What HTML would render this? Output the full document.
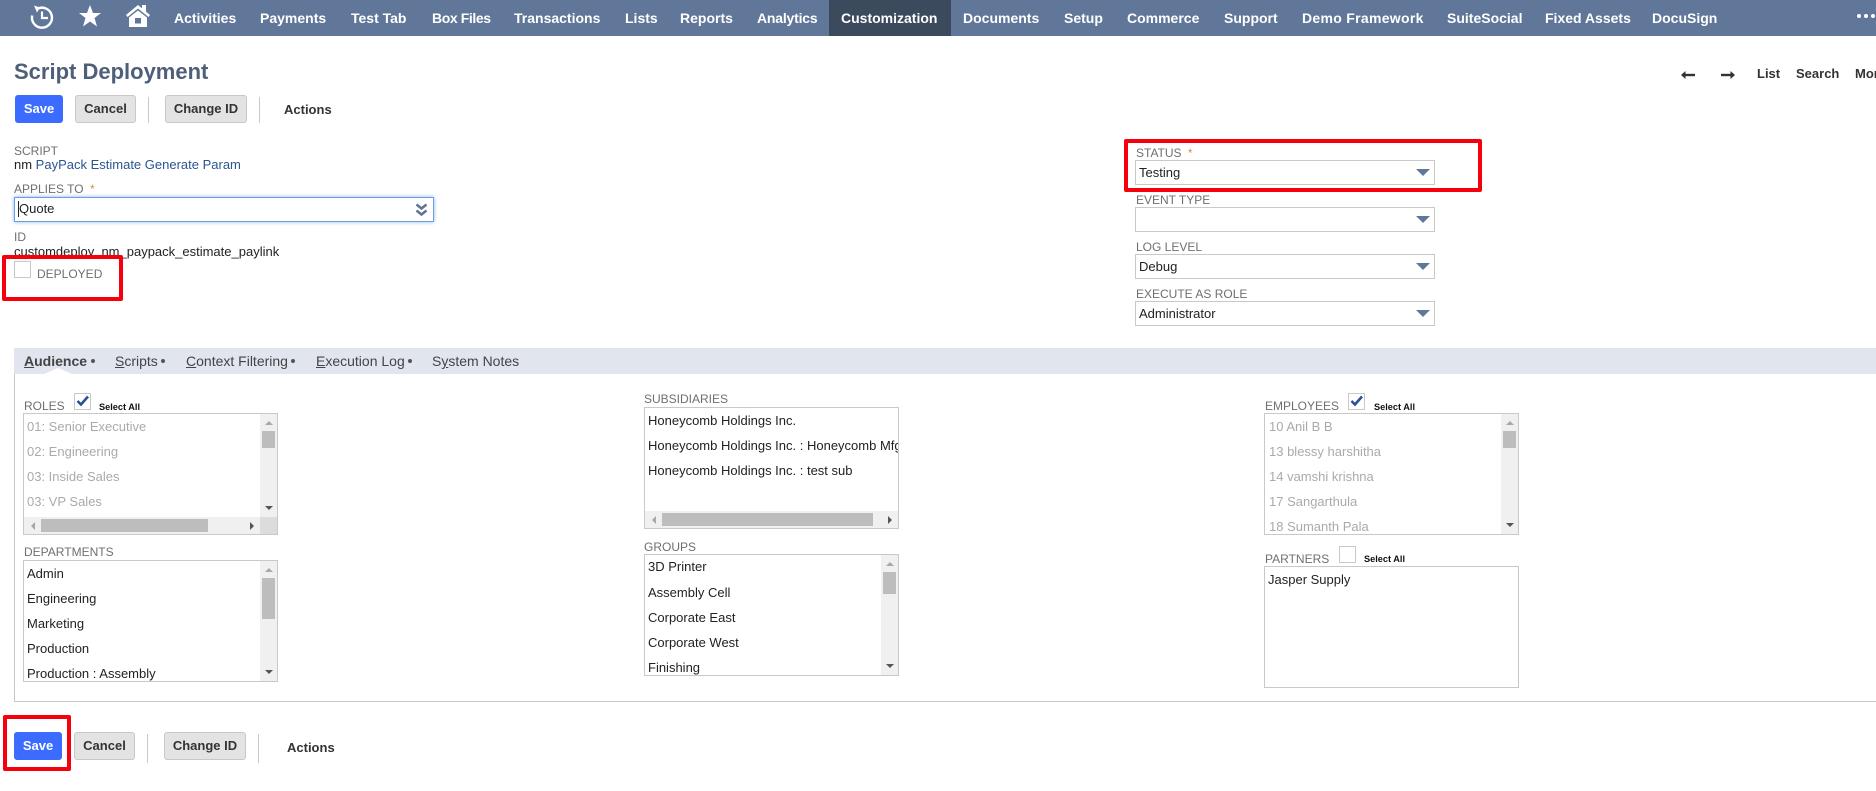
<!DOCTYPE html>
<html><head><meta charset="utf-8"><title>Script Deployment</title>
<style>
html,body{margin:0;padding:0;width:1876px;height:791px;overflow:hidden;background:#fff}
body{position:relative;font:13px/16px "Liberation Sans",Arial,sans-serif;color:#222}
.a,.t,.n,.l,.b,.box,.sel,.cb,.sa{position:absolute}
.t,.n,.l,.sa{white-space:nowrap}
.n{top:9px;font:bold 14px/18px "Liberation Sans",sans-serif;color:#fff}
.l{font-size:12px;line-height:14px;color:#6f6f6f}
.b{box-sizing:border-box;height:28px;top:95px;background:#e3e3e3;border:1px solid #c8c8c8;border-radius:3px;text-align:center;font:bold 13px/25px "Liberation Sans",sans-serif;color:#333}
.b.s{background:#3b6cff;border-color:#3b6cff;color:#fff}
.sep{position:absolute;width:1px;background:#c9c9c9}
.box{box-sizing:border-box;border:1px solid #c9c9c9;background:#fff;overflow:hidden;width:255px;height:122px}
.it{position:absolute;left:3px;white-space:nowrap;font-size:13px;line-height:16px;color:#222}
.dis .it{color:#aaa}
.vs{position:absolute;right:0;top:0;width:17px;height:100%;background:#f0f0f0}
.th{position:absolute;background:#bdbdbd}
.hs{position:absolute;left:0;bottom:0;height:17px;width:100%;background:#f0f0f0}
.corner{position:absolute;right:0;bottom:0;width:17px;height:17px;background:#dcdcdc}
.up,.dn,.lf,.rt{position:absolute;width:0;height:0}
.up{border-left:4px solid transparent;border-right:4px solid transparent;border-bottom:4px solid #a8a8a8}
.dn{border-left:4px solid transparent;border-right:4px solid transparent;border-top:4px solid #555}
.lf{border-top:4px solid transparent;border-bottom:4px solid transparent;border-right:4px solid #a8a8a8}
.rt{border-top:4px solid transparent;border-bottom:4px solid transparent;border-left:4px solid #555}
.sel{box-sizing:border-box;left:1135px;width:300px;height:25px;border:1px solid #c9c9c9;background:#fff;padding-left:3px;line-height:23px;font-size:13px;color:#222}
.sel svg{position:absolute;left:280px;top:7px}
.cb{box-sizing:border-box;width:17px;height:17px;border:1px solid #c9c9c9;background:#fff}
.sa{font:bold 9.2px/12px "Liberation Sans",sans-serif;color:#111}
.red{position:absolute;box-sizing:border-box;border:4px solid #f5000c;border-radius:2px}
.tab{position:absolute;top:353px;font-size:14px;line-height:16px;color:#444;white-space:nowrap}
.tab u{text-decoration:underline}
.d{position:absolute;top:359px;width:4px;height:4px;border-radius:50%;background:#555}
</style></head><body>

<div class="a" style="left:0;top:0;width:1876px;height:36px;background:#607799"></div>
<div class="a" style="left:829px;top:0;width:122px;height:36px;background:#3c4a5e"></div>

<svg class="a" style="left:29px;top:3px" width="26" height="28" viewBox="0 0 26 28" fill="none" stroke="#fff">
<path d="M9 5.5A10 10 0 1 1 3.2 12.5" stroke-width="2.4"/>
<path d="M5 2.5L11 4.5L8 9.5Z" fill="#fff" stroke="none"/>
<path d="M13 8.5V15H19" stroke-width="2.2"/>
</svg>
<svg class="a" style="left:78px;top:4px" width="24" height="24" viewBox="0 0 24 24"><path d="M12 1L15 9H23L16.5 14L19 22.5L12 17.5L5 22.5L7.5 14L1 9H9Z" fill="#fff"/></svg>
<svg class="a" style="left:125px;top:3px" width="26" height="25" viewBox="0 0 26 25">
<path d="M1 12L13 2L17 5.3V2H21V8.6L25 12L23.5 14L13 5.5L2.5 14Z" fill="#fff"/>
<path d="M4 14.5L13 7.5L22 14.5V24H4Z" fill="#fff"/><rect x="10" y="15" width="6" height="5.5" fill="#607799"/>
</svg>

<div class="n" style="left:174px">Activities</div>
<div class="n" style="left:260px">Payments</div>
<div class="n" style="left:351px">Test Tab</div>
<div class="n" style="left:432px;letter-spacing:-.4px">Box Files</div>
<div class="n" style="left:514px">Transactions</div>
<div class="n" style="left:625px">Lists</div>
<div class="n" style="left:680px">Reports</div>
<div class="n" style="left:757px;letter-spacing:-.2px">Analytics</div>
<div class="n" style="left:841px">Customization</div>
<div class="n" style="left:963px">Documents</div>
<div class="n" style="left:1064px">Setup</div>
<div class="n" style="left:1127px">Commerce</div>
<div class="n" style="left:1224px">Support</div>
<div class="n" style="left:1302px;letter-spacing:.3px">Demo Framework</div>
<div class="n" style="left:1447px">SuiteSocial</div>
<div class="n" style="left:1545px">Fixed Assets</div>
<div class="n" style="left:1652px">DocuSign</div>
<div class="a" style="left:1857px;top:14px;width:4px;height:4px;border-radius:50%;background:#fff"></div>
<div class="a" style="left:1864px;top:14px;width:4px;height:4px;border-radius:50%;background:#fff"></div>
<div class="a" style="left:1871px;top:14px;width:4px;height:4px;border-radius:50%;background:#fff"></div>

<div class="t" style="left:14px;top:58px;font:bold 22px/28px 'Liberation Sans',sans-serif;color:#4d5f79">Script Deployment</div>

<div class="b s" style="left:15px;width:48px">Save</div>
<div class="b" style="left:75px;width:61px">Cancel</div>
<div class="sep" style="left:148px;top:97px;height:26px"></div>
<div class="b" style="left:165px;width:82px">Change ID</div>
<div class="sep" style="left:259px;top:97px;height:26px"></div>
<div class="t" style="left:284px;top:102px;font:bold 13px/16px 'Liberation Sans',sans-serif;color:#333">Actions</div>

<svg class="a" style="left:1681px;top:69px" width="14" height="12" viewBox="0 0 14 12"><path d="M14 6H4" stroke="#333" stroke-width="2.4" fill="none"/><path d="M4.5 2V10L0 6Z" fill="#333"/></svg>
<svg class="a" style="left:1721px;top:69px" width="14" height="12" viewBox="0 0 14 12"><path d="M0 6H10" stroke="#333" stroke-width="2.4" fill="none"/><path d="M9.5 2V10L14 6Z" fill="#333"/></svg>
<div class="t" style="left:1757px;top:66px;font:bold 13px/16px 'Liberation Sans',sans-serif;color:#333">List</div>
<div class="t" style="left:1796px;top:66px;font:bold 13px/16px 'Liberation Sans',sans-serif;color:#333">Search</div>
<div class="t" style="left:1855px;top:66px;font:bold 13px/16px 'Liberation Sans',sans-serif;color:#333">More</div>

<div class="l" style="left:14px;top:144px">SCRIPT</div>
<div class="t" style="left:14px;top:157px"><span>nm </span><span style="color:#2b5590">PayPack Estimate Generate Param</span></div>
<div class="l" style="left:14px;top:182px">APPLIES TO <span style="color:#d9913d;margin-left:3px">*</span></div>
<div class="a" style="box-sizing:border-box;left:14px;top:197px;width:420px;height:25px;border:1px solid #6d9ee0;box-shadow:0 0 4px #8db4e8;background:#fff"></div>
<div class="a" style="left:18px;top:201px;width:1px;height:16px;background:#222"></div>
<div class="t" style="left:19px;top:201px">Quote</div>
<svg class="a" style="left:415px;top:203px" width="13" height="14" viewBox="0 0 13 14" fill="none" stroke="#5f7591" stroke-width="2.6"><path d="M1.5 1.5L6.5 5.5L11.5 1.5M1.5 7.5L6.5 11.5L11.5 7.5"/></svg>
<div class="l" style="left:14px;top:230px">ID</div>
<div class="t" style="left:14px;top:244px">customdeploy_nm_paypack_estimate_paylink</div>
<div class="cb" style="left:14px;top:261px;background:#fff"></div>
<div class="l" style="left:37px;top:267px">DEPLOYED</div>

<div class="l" style="left:1136px;top:146px">STATUS <span style="color:#d9913d;margin-left:3px">*</span></div>
<div class="sel" style="top:160px">Testing<svg width="14" height="9" viewBox="0 0 14 9"><path d="M0 1H14L7 8Z" fill="#607799"/></svg></div>
<div class="l" style="left:1136px;top:193px">EVENT TYPE</div>
<div class="sel" style="top:207px"><svg width="14" height="9" viewBox="0 0 14 9"><path d="M0 1H14L7 8Z" fill="#607799"/></svg></div>
<div class="l" style="left:1136px;top:240px">LOG LEVEL</div>
<div class="sel" style="top:254px">Debug<svg width="14" height="9" viewBox="0 0 14 9"><path d="M0 1H14L7 8Z" fill="#607799"/></svg></div>
<div class="l" style="left:1136px;top:287px">EXECUTE AS ROLE</div>
<div class="sel" style="top:301px">Administrator<svg width="14" height="9" viewBox="0 0 14 9"><path d="M0 1H14L7 8Z" fill="#607799"/></svg></div>

<div class="a" style="left:14px;top:348px;width:1862px;height:26px;background:#e1e5ee"></div>
<div class="a" style="left:14px;top:374px;width:1862px;height:328px;box-sizing:border-box;border-left:1px solid #c9c9c9;border-bottom:1px solid #c9c9c9"></div>
<svg class="a" style="left:44px;top:368px" width="28" height="6" viewBox="0 0 28 6"><path d="M0 6L14 0L28 6Z" fill="#fff"/></svg>
<div class="tab" style="left:24px;font-weight:bold"><u>A</u>udience</div><div class="d" style="left:91px"></div>
<div class="tab" style="left:115px"><u>S</u>cripts</div><div class="d" style="left:161px"></div>
<div class="tab" style="left:186px"><u>C</u>ontext Filtering</div><div class="d" style="left:291px"></div>
<div class="tab" style="left:316px"><u>E</u>xecution Log</div><div class="d" style="left:408px"></div>
<div class="tab" style="left:432px">S<u>y</u>stem Notes</div>

<!-- Roles -->
<div class="l" style="left:24px;top:399px">ROLES</div>
<div class="cb" style="left:74px;top:393px"><svg width="15" height="15" viewBox="0 0 15 15" style="display:block"><path d="M2.5 7L6 10.5L13 2.5" fill="none" stroke="#2d4f93" stroke-width="2.6"/></svg></div>
<div class="sa" style="left:99px;top:401px">Select All</div>
<div class="box dis" style="left:23px;top:413px">
<div class="it" style="top:5px">01: Senior Executive</div>
<div class="it" style="top:30px">02: Engineering</div>
<div class="it" style="top:55px">03: Inside Sales</div>
<div class="it" style="top:80px">03: VP Sales</div>
<div class="vs"><div class="up" style="left:5px;top:7px"></div><div class="th" style="left:2px;top:17px;width:13px;height:17px"></div><div class="dn" style="left:5px;top:92px"></div></div>
<div class="hs"><div class="lf" style="left:7px;top:5px"></div><div class="th" style="left:17px;top:2px;width:167px;height:13px"></div><div class="rt" style="left:226px;top:5px"></div><div class="corner"></div></div>
</div>

<!-- Departments -->
<div class="l" style="left:24px;top:545px">DEPARTMENTS</div>
<div class="box" style="left:23px;top:560px">
<div class="it" style="top:5px">Admin</div>
<div class="it" style="top:30px">Engineering</div>
<div class="it" style="top:55px">Marketing</div>
<div class="it" style="top:80px">Production</div>
<div class="it" style="top:105px">Production : Assembly</div>
<div class="vs"><div class="up" style="left:5px;top:7px"></div><div class="th" style="left:2px;top:17px;width:13px;height:41px"></div><div class="dn" style="left:5px;top:109px"></div></div>
</div>

<!-- Subsidiaries -->
<div class="l" style="left:644px;top:392px">SUBSIDIARIES</div>
<div class="box" style="left:644px;top:407px">
<div class="it" style="top:5px">Honeycomb Holdings Inc.</div>
<div class="it" style="top:30px">Honeycomb Holdings Inc. : Honeycomb Mfg.</div>
<div class="it" style="top:55px">Honeycomb Holdings Inc. : test sub</div>
<div class="hs"><div class="lf" style="left:7px;top:5px"></div><div class="th" style="left:17px;top:2px;width:211px;height:13px"></div><div class="rt" style="left:243px;top:5px"></div></div>
</div>

<!-- Groups -->
<div class="l" style="left:644px;top:540px">GROUPS</div>
<div class="box" style="left:644px;top:554px">
<div class="it" style="top:4px">3D Printer</div>
<div class="it" style="top:30px">Assembly Cell</div>
<div class="it" style="top:55px">Corporate East</div>
<div class="it" style="top:80px">Corporate West</div>
<div class="it" style="top:105px">Finishing</div>
<div class="vs"><div class="up" style="left:5px;top:7px"></div><div class="th" style="left:2px;top:17px;width:13px;height:22px"></div><div class="dn" style="left:5px;top:109px"></div></div>
</div>

<!-- Employees -->
<div class="l" style="left:1265px;top:399px">EMPLOYEES</div>
<div class="cb" style="left:1348px;top:393px"><svg width="15" height="15" viewBox="0 0 15 15" style="display:block"><path d="M2.5 7L6 10.5L13 2.5" fill="none" stroke="#2d4f93" stroke-width="2.6"/></svg></div>
<div class="sa" style="left:1374px;top:401px">Select All</div>
<div class="box dis" style="left:1264px;top:413px">
<div class="it" style="top:5px;left:4px">10 Anil B B</div>
<div class="it" style="top:30px;left:4px">13 blessy harshitha</div>
<div class="it" style="top:55px;left:4px">14 vamshi krishna</div>
<div class="it" style="top:80px;left:4px">17 Sangarthula</div>
<div class="it" style="top:105px;left:4px">18 Sumanth Pala</div>
<div class="vs"><div class="up" style="left:5px;top:7px"></div><div class="th" style="left:2px;top:17px;width:13px;height:17px"></div><div class="dn" style="left:5px;top:109px"></div></div>
</div>

<!-- Partners -->
<div class="l" style="left:1265px;top:552px">PARTNERS</div>
<div class="cb" style="left:1339px;top:546px"></div>
<div class="sa" style="left:1364px;top:553px">Select All</div>
<div class="box" style="left:1264px;top:566px">
<div class="it" style="top:5px">Jasper Supply</div>
</div>

<!-- Bottom buttons -->
<div class="b s" style="left:14px;top:732px;width:48px">Save</div>
<div class="b" style="left:74px;top:732px;width:61px">Cancel</div>
<div class="sep" style="left:147px;top:734px;height:29px"></div>
<div class="b" style="left:164px;top:732px;width:82px">Change ID</div>
<div class="sep" style="left:258px;top:734px;height:29px"></div>
<div class="t" style="left:287px;top:740px;font:bold 13px/16px 'Liberation Sans',sans-serif;color:#333">Actions</div>

<!-- Red annotation boxes -->
<div class="red" style="left:2px;top:255px;width:121px;height:46px"></div>
<div class="red" style="left:1124px;top:139px;width:358px;height:53px"></div>
<div class="red" style="left:3px;top:715px;width:68px;height:56px"></div>

</body></html>
